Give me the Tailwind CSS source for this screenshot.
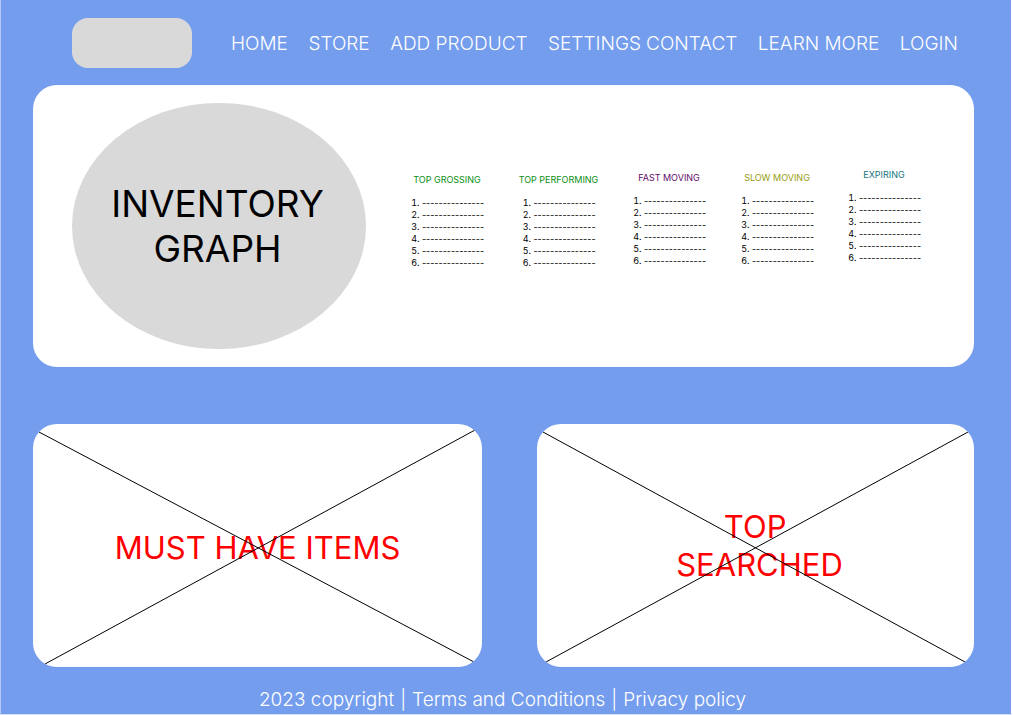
<!DOCTYPE html>
<html lang="en">
<head>
<meta charset="utf-8">
<meta name="viewport" content="width=device-width, initial-scale=1">
<title>Inventory</title>
<script src="https://cdn.jsdelivr.net/npm/@tailwindcss/browser@4"></script>
</head>
<body class="bg-white font-['Inter',sans-serif]">
<div class="flex min-h-screen flex-col border-r-2 border-b border-l border-r-white border-b-[#d3e0fa] border-l-[#b4caf6] bg-[#749ded] pr-[37px] pl-8">
  <header class="flex items-center pt-[18px] pr-4 pb-[17px] pl-[39px]">
    <a href="#" aria-label="Logo" class="h-[50px] w-[120px] shrink-0 rounded-2xl bg-[#d9d9d9]"></a>
    <nav class="ml-[39px] flex flex-1 justify-between pt-[2px] text-[19px] leading-6 font-light whitespace-nowrap text-white">
      <a href="#">HOME</a>
      <a href="#">STORE</a>
      <a href="#">ADD PRODUCT</a>
      <span class="flex gap-[5px]"><a href="#">SETTINGS</a><a href="#">CONTACT</a></span>
      <a href="#">LEARN MORE</a>
      <a href="#">LOGIN</a>
    </nav>
  </header>

  <main>
    <section class="flex rounded-3xl bg-white py-[18px] pr-[37px] pl-[39px]">
      <div class="flex h-[246px] w-[294px] shrink-0 items-center justify-center rounded-[50%] bg-[#d9d9d9]">
        <h1 class="pr-[3px] text-center text-[37px] leading-[45px] text-black">INVENTORY<br>GRAPH</h1>
      </div>
      <div class="ml-[26px] grid flex-1 grid-cols-[110fr_113fr_108fr_108fr_106fr] items-start pt-[66px] text-[9px] leading-3 whitespace-nowrap text-black">
        <section class="flex flex-col items-center gap-[11px] pt-[5px]">
          <h2 class="text-[#0a8f12]">TOP GROSSING</h2>
          <ol class="list-decimal pl-3"><li>---------------</li><li>---------------</li><li>---------------</li><li>---------------</li><li>---------------</li><li>---------------</li></ol>
        </section>
        <section class="flex flex-col items-center gap-[11px] pt-[5px]">
          <h2 class="text-[#0a8f12]">TOP PERFORMING</h2>
          <ol class="list-decimal pl-3"><li>---------------</li><li>---------------</li><li>---------------</li><li>---------------</li><li>---------------</li><li>---------------</li></ol>
        </section>
        <section class="flex flex-col items-center gap-[11px] pt-[3px]">
          <h2 class="text-[#620a6b]">FAST MOVING</h2>
          <ol class="list-decimal pl-3"><li>---------------</li><li>---------------</li><li>---------------</li><li>---------------</li><li>---------------</li><li>---------------</li></ol>
        </section>
        <section class="flex flex-col items-center gap-[11px] pt-[3px]">
          <h2 class="text-[#979c0f]">SLOW MOVING</h2>
          <ol class="list-decimal pl-3"><li>---------------</li><li>---------------</li><li>---------------</li><li>---------------</li><li>---------------</li><li>---------------</li></ol>
        </section>
        <section class="flex flex-col items-center gap-[11px]">
          <h2 class="text-[#15757f]">EXPIRING</h2>
          <ol class="list-decimal pl-3"><li>---------------</li><li>---------------</li><li>---------------</li><li>---------------</li><li>---------------</li><li>---------------</li></ol>
        </section>
      </div>
    </section>

    <div class="mt-[57px] grid grid-cols-[449fr_437fr] gap-[55px]">
      <section class="relative flex h-[243px] items-center justify-center overflow-hidden rounded-3xl bg-white">
        <h2 class="pt-1 text-center text-[31px] leading-[38px] text-[#ff0000]">MUST HAVE ITEMS</h2>
        <svg class="absolute inset-0 h-full w-full" viewBox="0 0 449 243" preserveAspectRatio="none" fill="none" stroke="#000" stroke-width="1" aria-hidden="true"><path d="M6 8L441 238M12 240L442 6"/></svg>
      </section>
      <section class="relative flex h-[243px] items-center justify-center overflow-hidden rounded-3xl bg-white">
        <h2 class="pl-2 text-center text-[31px] leading-[38px] text-[#ff0000]">TOP&nbsp;<br>SEARCHED</h2>
        <svg class="absolute inset-0 h-full w-full" viewBox="0 0 437 243" preserveAspectRatio="none" fill="none" stroke="#000" stroke-width="1" aria-hidden="true"><path d="M6 8L428 238M9 238L431 8"/></svg>
      </section>
    </div>
  </main>

  <footer class="flex justify-center gap-[6px] pt-[21px] pr-[2px] text-[19px] leading-6 font-light text-white">
    <span>2023 copyright</span><span>|</span><a href="#">Terms and Conditions</a><span>|</span><a href="#">Privacy policy</a>
  </footer>
</div>
</body>
</html>
